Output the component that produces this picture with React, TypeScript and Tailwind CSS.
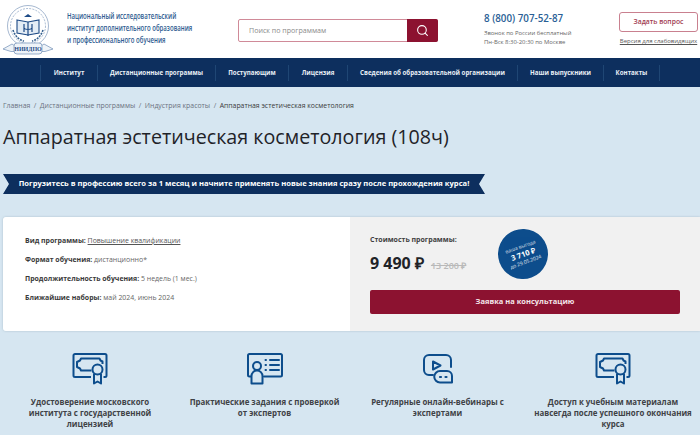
import { Search } from "lucide-react";

const navItems = [
  { label: "Институт", width: "w-[57px]" },
  { label: "Дистанционные программы", width: "w-[118px]" },
  { label: "Поступающим", width: "w-[73px]" },
  { label: "Лицензия", width: "w-[59px]" },
  { label: "Сведения об образовательной организации", width: "w-[170px]" },
  { label: "Наши выпускники", width: "w-[86px]" },
  { label: "Контакты", width: "w-[57px]" },
];

function Logo() {
  return (
    <svg viewBox="0 0 56 52" className="w-[56px] h-[52px] shrink-0" fill="none">
      <circle cx="26" cy="21" r="20.500" stroke="#8fa6c4" strokeWidth="0.8" />
      <circle cx="26" cy="21" r="17.500" stroke="#6f8db4" strokeWidth="0.6" strokeDasharray="2 1.2" />
      <path d="M26 9l4 3h-8z" fill="#1d4a86" />
      <path d="M15 15l11 2 11-2v13l-11 2-11-2z" stroke="#1d4a86" strokeWidth="1.100" fill="#e3ecf5" />
      <path d="M22 19v8M30 19v8M26 17v14M22 23c1 2 7 2 8 0" stroke="#1d4a86" strokeWidth="1.200" />
      <path d="M11 25c2 6 6 10 11 11M41 25c-2 6-6 10-11 11" stroke="#35608f" strokeWidth="1.600" strokeDasharray="2 1" />
      <path d="M1 44l9-5 3 2h26l3-2 9 5-8 2.500H9z" fill="#eef3f8" stroke="#6f8db4" strokeWidth="0.700" />
      <rect x="12" y="38" width="28" height="11" rx="3" fill="#eef3f8" stroke="#6f8db4" strokeWidth="0.700" />
      <text x="26" y="46" textAnchor="middle" fontSize="6" fontWeight="700" fill="#1d4a86" fontFamily="Liberation Serif, serif">
        НИИДПО
      </text>
    </svg>
  );
}

function CertificateIcon() {
  return (
    <svg viewBox="0 0 36 32" className="w-[36px] h-[32px]" fill="none" stroke="#0d4d8c" strokeWidth="2" strokeLinejoin="round">
      <path d="M19 24H3a1.500 1.500 0 0 1-1.500-1.500v-20A1.500 1.500 0 0 1 3 1h30a1.500 1.500 0 0 1 1.500 1.500v20A1.500 1.500 0 0 1 33 24h-1.500" />
      <path d="M19.500 17.500H9l-1-2-3-1.500V9l3-1.500 1-2h18.500l1 2 2 1v2.500" />
      <circle cx="25.500" cy="16.500" r="5" />
      <path d="M22 21v9.500l3.500-2 3.500 2V21" />
    </svg>
  );
}

function StudentIcon() {
  return (
    <svg viewBox="0 0 38 32" className="w-[38px] h-[32px]" fill="none" stroke="#0d4d8c" strokeWidth="2" strokeLinejoin="round" strokeLinecap="round">
      <path d="M5 23.500H3.500A1.500 1.500 0 0 1 2 22V2.500A1.500 1.500 0 0 1 3.500 1h31A1.500 1.500 0 0 1 36 2.500V22a1.500 1.500 0 0 1-1.500 1.500H18" />
      <circle cx="11" cy="13" r="4" />
      <path d="M5.500 30.500V23c0-3 2.500-5.500 5.500-5.500s5.500 2.500 5.500 5.500v7.500z" />
      <path d="M19.500 7h.5M24 7h9M19.500 12h.5M24 12h9M19.500 17h.5M24 17h9" />
    </svg>
  );
}

function WebinarIcon() {
  return (
    <svg viewBox="0 0 30 30" className="w-[30px] h-[30px]" fill="none" stroke="#0d4d8c" strokeWidth="2" strokeLinejoin="round" strokeLinecap="round">
      <path d="M10 21H6a5 5 0 0 1-5-5V6a5 5 0 0 1 5-5h17a5 5 0 0 1 5 5v7" />
      <path d="M10 7.500l7.500 4-7.500 4z" />
      <path d="M17 17h7a5 5 0 0 1 5 5v6.500H17a5.500 5.500 0 0 1 0-11.500z" />
      <path d="M17 23h1M22.500 23h1" strokeWidth="2.200" />
    </svg>
  );
}

function Feature({ icon, lines, width }: { icon: React.ReactNode; lines: string[]; width: string }) {
  return (
    <div className={`flex flex-col items-center ${width}`}>
      <div className="h-[32px] flex items-center justify-center">{icon}</div>
      <div className="mt-[12px] text-center text-[7.900px] leading-[11px] font-bold text-[#3f4246] whitespace-nowrap">
        {lines.map((line) => (
          <div key={line}>{line}</div>
        ))}
      </div>
    </div>
  );
}

export default function App() {
  return (
    <div className="w-[700px] h-[435px] overflow-hidden bg-[#d6e6f1] font-['Open_Sans',sans-serif]">
      {/* Header */}
      <header className="h-[58px] bg-white flex items-start">
        <div className="ml-[2px] mt-[5px]">
          <Logo />
        </div>
        <div className="ml-[9px] mt-[10px] w-[150px] origin-left scale-x-[0.71] text-[#2d5b8f] text-[8.500px] leading-[12px] font-semibold whitespace-nowrap">
          <div>Национальный исследовательский</div>
          <div>институт дополнительного образования</div>
          <div>и профессионального обучения</div>
        </div>
        <div className="ml-[21px] mt-[19px] w-[200px] h-[23px] flex rounded-[2px] border border-[#d08a98] bg-white">
          <div className="flex-1 pl-[10px] text-[7.100px] leading-[21px] text-[#8a8a8a]">Поиск по программам</div>
          <div className="w-[31px] -m-px ml-0 h-[23px] bg-[#8c1230] rounded-r-[2px] flex items-center justify-center">
            <Search size={13} color="#ffffff" strokeWidth={2} />
          </div>
        </div>
        <div className="ml-[46px] mt-[12px] w-[135px]">
          <div className="text-[9.800px] leading-[14px] font-semibold text-[#2a5f96]">8 (800) 707-52-87</div>
          <div className="mt-[3px] text-[5.900px] leading-[9px] text-[#666666]">
            <div>Звонок по России бесплатный</div>
            <div>Пн-Вск 8:30-20:30 по Москве</div>
          </div>
        </div>
        <div className="mt-[12px] w-[79px] flex flex-col items-center">
          <div className="w-[79px] h-[20px] border border-[#c9808f] rounded-[3px] flex items-center justify-center text-[6.800px] font-semibold text-[#a13a50]">
            Задать вопрос
          </div>
          <div className="mt-[5px] text-[6px] leading-[8px] text-[#555555] underline whitespace-nowrap">Версия для слабовидящих</div>
        </div>
      </header>

      {/* Nav */}
      <nav className="h-[29px] bg-[#0d2f5e] flex items-center pl-[40px]">
        {navItems.map((item) => (
          <div
            key={item.label}
            className={`h-[16px] ${item.width} border-l border-[#1f4674] last:border-r flex items-center justify-center text-[6.200px] font-bold text-[#e8eef5] whitespace-nowrap`}
          >
            {item.label}
          </div>
        ))}
      </nav>

      {/* Breadcrumbs */}
      <div className="mt-[14px] ml-[3px] flex gap-[3.500px] text-[6.900px] leading-[10px] text-[#6b7280] whitespace-nowrap">
        <span>Главная</span>
        <span>/</span>
        <span>Дистанционные программы</span>
        <span>/</span>
        <span>Индустрия красоты</span>
        <span>/</span>
        <span className="text-[#3a3a3a]">Аппаратная эстетическая косметология</span>
      </div>

      <h1 className="mt-[12px] ml-[3px] text-[19.700px] leading-[28px] font-normal text-[#1f2328] whitespace-nowrap">
        Аппаратная эстетическая косметология (108ч)
      </h1>

      {/* Banner */}
      <div className="mt-[23px] ml-[3px] w-[482px] h-[20px] bg-[#0d2f5e] [clip-path:polygon(0_0,100%_0,calc(100%-6px)_50%,100%_100%,0_100%,6px_50%)] flex items-center justify-center text-[7.600px] font-bold text-white whitespace-nowrap">
        Погрузитесь в профессию всего за 1 месяц и начните применять новые знания сразу после прохождения курса!
      </div>

      {/* Card */}
      <div className="mt-[23px] ml-[3px] w-[697px] h-[114px] flex rounded-l-[3px] overflow-hidden shadow-[0_0_2px_rgba(120,140,160,0.5)]">
        <div className="w-[347px] bg-white pl-[22px] pt-[19px] text-[6.950px] leading-[10px] text-[#666666] flex flex-col gap-[9px]">
          <div>
            <b className="font-bold text-[#3a3a3a]">Вид программы: </b>
            <span className="underline text-[#555555]">Повышение квалификации</span>
          </div>
          <div>
            <b className="font-bold text-[#3a3a3a]">Формат обучения: </b>дистанционно*
          </div>
          <div>
            <b className="font-bold text-[#3a3a3a]">Продолжительность обучения: </b>5 недель (1 мес.)
          </div>
          <div>
            <b className="font-bold text-[#3a3a3a]">Ближайшие наборы: </b>май 2024, июнь 2024
          </div>
        </div>
        <div className="flex-1 bg-[#f1f1f1] pl-[20px] pr-[20px] pt-[18px] relative">
          <div className="text-[7px] leading-[10px] font-bold text-[#3f3f3f]">Стоимость программы:</div>
          <div className="mt-[6px] flex items-baseline gap-[7px] h-[24px]">
            <span className="text-[16px] font-bold text-[#1f2328]">9 490 ₽</span>
            <span className="text-[9px] font-semibold text-[#b9b9b9] line-through">13 200 ₽</span>
          </div>
          <div className="mt-[15px] h-[24px] bg-[#8c1230] rounded-[2px] flex items-center justify-center text-[7.500px] font-bold text-[#f4e6ea]">
            Заявка на консультацию
          </div>
          {/* discount badge */}
          <div className="absolute left-[148px] top-[12px] w-[50px] h-[50px] rounded-full bg-[#0d4d8c] flex flex-col items-center justify-center -rotate-[20deg] text-white">
            <span className="text-[5px] leading-[7px] opacity-80">ваша выгода</span>
            <span className="text-[7.500px] leading-[9px] font-bold">3 710 ₽</span>
            <span className="text-[5px] leading-[7px] opacity-90">до 29.05.2024</span>
          </div>
        </div>
      </div>

      {/* Features */}
      <div className="mt-[22px] flex">
        <div className="w-[180px] flex justify-center">
          <Feature icon={<CertificateIcon />} width="w-[130px]" lines={["Удостоверение московского", "института с государственной", "лицензией"]} />
        </div>
        <div className="w-[169px] flex justify-center">
          <Feature icon={<StudentIcon />} width="w-[150px]" lines={["Практические задания с проверкой", "от экспертов"]} />
        </div>
        <div className="w-[177px] flex justify-center">
          <Feature icon={<WebinarIcon />} width="w-[135px]" lines={["Регулярные онлайн-вебинары с", "экспертами"]} />
        </div>
        <div className="w-[174px] flex justify-center">
          <Feature icon={<CertificateIcon />} width="w-[160px]" lines={["Доступ к учебным материалам", "навсегда после успешного окончания", "курса"]} />
        </div>
      </div>
    </div>
  );
}
